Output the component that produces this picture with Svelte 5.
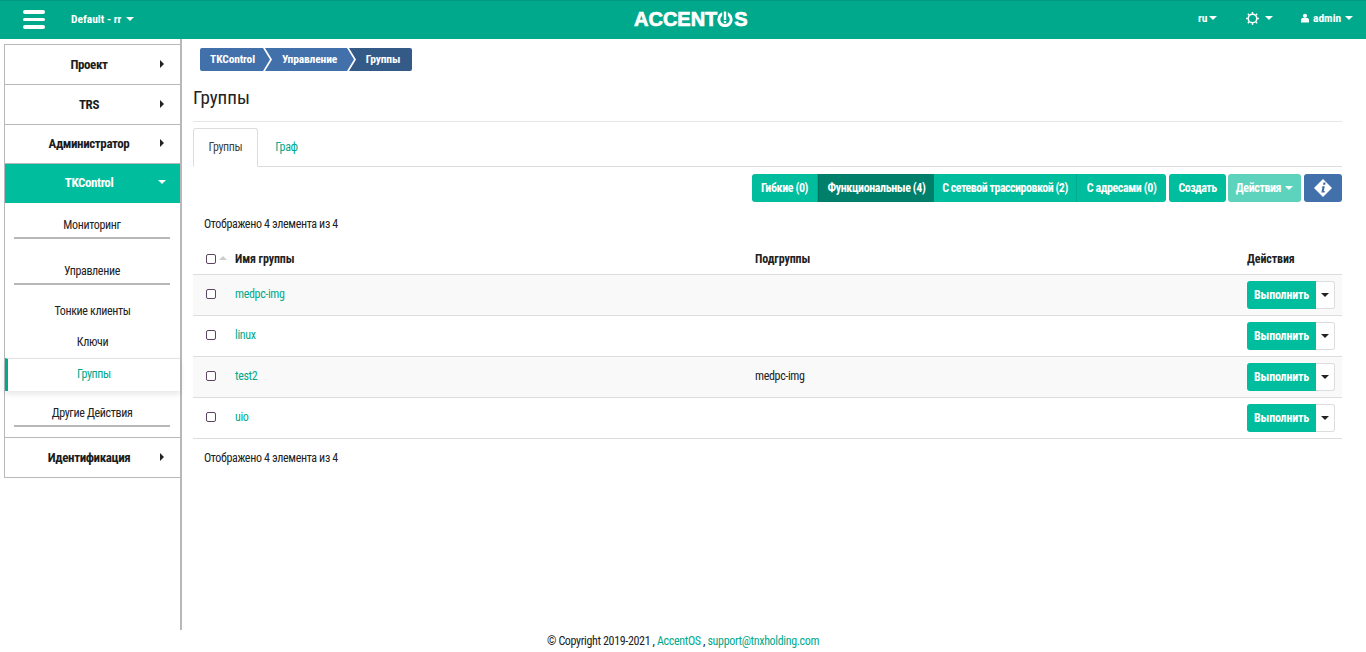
<script>
  const rows = [
    { name: 'medpc-img', sub: '' },
    { name: 'linux', sub: '' },
    { name: 'test2', sub: 'medpc-img' },
    { name: 'uio', sub: '' }
  ];
</script>

<div class="page">
  <header class="top">
    <div class="burger"><i></i><i></i><i></i></div>
    <div class="proj">Default - rr <b class="caret"></b></div>
    <div class="logo">ACCENT<svg class="logo-o" viewBox="0 0 16 16" width="16" height="16"><circle cx="8" cy="8.5" r="6.2" fill="none" stroke="#fff" stroke-width="3"/><rect x="5.2" y="0" width="5.6" height="5" fill="#00a98c"/><rect x="6.8" y="0.5" width="2.4" height="8.5" fill="#fff"/><rect x="6.8" y="10" width="2.4" height="2.2" fill="#fff"/></svg>S</div>
    <div class="tr lang">ru<b class="caret"></b></div>
    <div class="tr gear">
      <svg viewBox="0 0 14 14" width="13" height="13"><circle cx="7" cy="7" r="4.6" fill="none" stroke="#fff" stroke-width="1.6"/><path d="M7 0v2.4M7 11.6V14M0 7h2.4M11.6 7H14M2 2l1.7 1.7M10.3 10.3L12 12M2 12l1.7-1.7M10.3 3.7L12 2" stroke="#fff" stroke-width="1.5"/></svg>
      <b class="caret"></b>
    </div>
    <div class="tr user">
      <svg viewBox="0 0 10 11" width="8" height="10"><circle cx="5" cy="2.8" r="2.6" fill="#fff"/><path d="M0 11V7.6C0 6 1.4 5.4 2.4 5.4h5.2C8.6 5.4 10 6 10 7.6V11z" fill="#fff"/></svg>
      admin<b class="caret"></b>
    </div>
  </header>

  <div class="body">
    <aside class="side">
      <div class="menu">
        <div class="item first">Проект<b class="arrow"></b></div>
        <div class="item">TRS<b class="arrow"></b></div>
        <div class="item third">Администратор<b class="arrow"></b></div>
        <div class="item active">TKControl<b class="arrow-down"></b></div>
        <div class="sub">
          <div class="sub-h h1">Мониторинг</div>
          <div class="sub-h h2">Управление</div>
          <div class="leaf l1">Тонкие клиенты</div>
          <div class="leaf l2">Ключи</div>
          <div class="leaf cur">Группы</div>
          <div class="sub-h h3">Другие Действия</div>
        </div>
        <div class="item last">Идентификация<b class="arrow"></b></div>
      </div>
    </aside>

    <main class="main">
      <nav class="crumbs">
        <span class="c c1">TKControl</span>
        <span class="c c2">Управление</span>
        <span class="c c3">Группы</span>
      </nav>
      <h1>Группы</h1>
      <div class="tabs">
        <span class="tab on">Группы</span>
        <span class="tab t2">Граф</span>
      </div>
      <div class="actions">
        <div class="group">
          <span class="btn w1">Гибкие (0)</span>
          <span class="btn dark w2">Функциональные (4)</span>
          <span class="btn w3">С сетевой трассировкой (2)</span>
          <span class="btn w4">С адресами (0)</span>
        </div>
        <span class="btn solo w5">Создать</span>
        <span class="btn solo dim w6">Действия<b class="caret"></b></span>
        <span class="btn info"><svg viewBox="0 0 20 20" width="20" height="20"><path d="M10 1l9 9-9 9-9-9z" fill="#fff"/><path d="M10.4 4.6h2.2l-.4 2.2H10zM9.6 8.2h2.2l-1 4.8h1l-.3 1.4H8.4l1-4.8h-.8z" fill="#3f6eaa"/></svg></span>
      </div>
      <div class="count">Отображено 4 элемента из 4</div>
      <div class="thead">
        <span class="cb"></span><span class="sort"></span>
        <span class="c-name">Имя группы</span>
        <span class="c-sub">Подгруппы</span>
        <span class="c-act">Действия</span>
      </div>
      {#each rows as r, i}
        <div class="row" class:odd={i % 2 === 0}>
          <span class="cb"></span>
          <a class="c-name link" href="#top">{r.name}</a>
          <span class="c-sub">{r.sub}</span>
          <span class="split"><span class="run">Выполнить</span><span class="drop"><b class="caret k"></b></span></span>
        </div>
      {/each}
      <div class="count bottom">Отображено 4 элемента из 4</div>
    </main>
  </div>

  <footer class="foot">© Copyright 2019-2021 , <a href="#top">AccentOS</a> , <a href="#top">support@tnxholding.com</a></footer>
</div>

<style>
  :global(body) { margin: 0; background: #fff; }
  .page {
    width: 1366px; height: 652px; overflow: hidden; display: flex; flex-direction: column;
    font-family: "Liberation Sans Narrow", "Roboto", "Liberation Sans", sans-serif;
    font-stretch: condensed;
    font-size: 12px; letter-spacing: -0.35px; color: #222;
  }
  .top {
    height: 39px; flex: none; box-sizing: border-box; background: #00a98c; border-top: 1px solid #009a80;
    display: flex; align-items: center; color: #fff; position: relative;
  }
  .burger { margin-left: 23px; width: 22px; display: flex; flex-direction: column; gap: 4px; margin-top: -1px; }
  .burger i { display: block; height: 3.5px; background: #fff; border-radius: 2px; }
  .proj { margin-left: 26px; font-size: 11.5px; letter-spacing: 0; font-weight: 700; margin-top: -3px; width: 64px; white-space: nowrap; }
  .caret { display: inline-block; width: 0; height: 0; border: 4px solid transparent; border-top: 4px solid #fff; border-bottom: 0; vertical-align: 2px; margin-left: 2px; }
  .caret.k { border-top-color: #222; margin: 0; }
  .logo { margin-left: 499px; width: 114px; font-family: "Liberation Sans", sans-serif; font-stretch: normal; font-weight: 700; font-size: 20px; letter-spacing: 0; -webkit-text-stroke: 0.7px #fff; display: flex; align-items: center; color: #fff; margin-top: -2px; }
  .logo-o { margin: 0 1px 0 0; }
  .tr { font-size: 11.5px; letter-spacing: 0; font-weight: 700; display: flex; align-items: center; margin-top: -4px; white-space: nowrap; }
  .lang { margin-left: 450px; width: 48px; }
  .gear { width: 55px; gap: 4px; }
  .user { gap: 4px; }
  .user .caret { margin-left: 0; }
  .body { flex: 1; display: flex; min-height: 0; }
  .side { width: 182px; flex: none; box-sizing: border-box; height: 591px; border-right: 2px solid #b8b8b8; padding: 5px 0 0 4px; }
  .menu { border: 1px solid #b8b8b8; border-right: 0; }
  .item { height: 39px; border-bottom: 1px solid #b8b8b8; display: flex; align-items: center; justify-content: center; font-size: 13px; letter-spacing: -0.4px; font-weight: 700; position: relative; padding-right: 7px; color: #1c1c1c; }
  .item.third { height: 36px; padding-bottom: 2px; }
  .item.third .arrow { top: 14px; }
  .item.last { border-bottom: 0; }
  .active { background: #00bd9d; color: #fff; height: 39px; border-bottom: 0; box-sizing: border-box; padding-bottom: 2px; }
  .arrow { position: absolute; right: 16px; top: 15px; border: 4px solid transparent; border-left: 4px solid #222; border-right: 0; }
  .arrow-down { position: absolute; right: 14px; top: 16px; border: 4px solid transparent; border-top: 4px solid #fff; border-bottom: 0; }
  .sub { border-bottom: 1px solid #b8b8b8; box-sizing: border-box; height: 235px; display: flex; flex-direction: column; }
  .sub-h { margin: 0 10px 0 9px; box-sizing: border-box; border-bottom: 2px solid #b8b8b8; text-align: center; }
  .sub-h.h1 { height: 36px; padding-top: 15px; }
  .sub-h.h2 { height: 46px; padding-top: 25px; }
  .sub-h.h3 { height: 36px; padding-top: 15px; }
  .leaf { text-align: center; height: 31px; line-height: 31px; }
  .l1 { margin-top: 11px; }
  .cur { height: 33px; line-height: 31px; box-sizing: border-box; border-top: 1px solid #e4e4e4; border-left: 3px solid #00a98c; color: #00a98c; box-shadow: 0 3px 6px rgba(0,0,0,.1); }
  .main { width: 1149px; margin-left: 11px; display: flex; flex-direction: column; }
  .crumbs { display: flex; margin: 9px 0 0 7px; height: 23px; width: 212px; border-radius: 2px; overflow: hidden; background: #fff; }
  .c { display: flex; align-items: center; justify-content: center; color: #fff; font-size: 11.5px; letter-spacing: -0.15px; font-weight: 700; height: 23px; flex: none; background: #4170ab; box-sizing: border-box; padding-bottom: 2px; }
  .c1 { width: 70px; padding-right: 5px; clip-path: polygon(0 0, 63px 0, 70px 50%, 63px 100%, 0 100%); }
  .c2 { width: 89px; margin-left: -5px; padding-left: 7px; padding-right: 7px; clip-path: polygon(0 0, 82px 0, 89px 50%, 82px 100%, 0 100%, 7px 50%); }
  .c3 { width: 63px; margin-left: -5px; padding-left: 5px; background: #345a88; clip-path: polygon(0 0, 100% 0, 100% 100%, 0 100%, 7px 50%); }
  h1 { margin: 0; height: 51px; box-sizing: border-box; border-bottom: 1px solid #e6e6e6; padding-top: 17px; font-size: 19px; letter-spacing: 0; font-weight: 400; line-height: 20px; color: #222; }
  .tabs { margin-top: 6px; height: 39px; box-sizing: border-box; border-bottom: 1px solid #ddd; display: flex; }
  .tab { width: 65px; height: 39px; box-sizing: border-box; display: flex; align-items: center; justify-content: center; color: #00a98c; padding-bottom: 2px; }
  .tab.t2 { width: 57px; }
  .tab.on { color: #444; border: 1px solid #ddd; border-bottom-color: #fff; border-radius: 3px 3px 0 0; }
  .actions { display: flex; justify-content: flex-end; gap: 3px; margin-top: 7px; height: 28px; }
  .group { display: flex; border-radius: 3px; overflow: hidden; }
  .btn { height: 28px; box-sizing: border-box; display: flex; align-items: center; justify-content: center; background: #00bd9d; color: #fff; font-weight: 700; letter-spacing: -0.4px; border-right: 1px solid #00a98c; white-space: nowrap; flex: none; }
  .w1 { width: 66px; }
  .w2 { width: 116px; }
  .w3 { width: 143px; letter-spacing: -0.5px; }
  .w4 { width: 89px; }
  .w5 { width: 57px; margin-right: -1px; letter-spacing: -0.55px; }
  .w6 { width: 73px; }
  .group .btn:last-child { border-right: 0; }
  .dark { background: #007f6b; border-right: 0; border-left: 1px solid #00705e; }
  .solo { border-right: 0; border-radius: 3px; }
  .dim { background: #5dd3be; gap: 2px; }
  .info { background: #4170ab; border-right: 0; border-radius: 3px; width: 38px; padding: 0; }
  .count { margin: 15px 0 0 11px; height: 14px; line-height: 14px; }
  .thead { display: flex; align-items: center; height: 36px; margin-top: 8px; box-sizing: border-box; border-bottom: 1px solid #ddd; padding-left: 13px; position: relative; font-weight: 700; letter-spacing: -0.1px; padding-top: 5px; }
  .cb { width: 8px; height: 8px; border: 1px solid #5a4660; border-radius: 2px; flex: none; background: #fff; }
  .sort { position: absolute; left: 26px; top: 17px; border: 4px solid transparent; border-bottom: 4px solid #ccc; border-top: 0; }
  .c-name { position: absolute; left: 42px; }
  .c-sub { position: absolute; left: 562px; }
  .c-act { position: absolute; left: 1054px; }
  .row { height: 41px; box-sizing: border-box; border-bottom: 1px solid #ddd; display: flex; align-items: center; padding-left: 13px; padding-bottom: 2px; position: relative; }
  .odd { background: #f9f9f9; }
  .link { color: #00a98c; text-decoration: none; }
  .split { position: absolute; left: 1054px; top: 6px; display: flex; height: 28px; }
  .run { width: 69px; height: 28px; background: #00bd9d; color: #fff; font-weight: 700; letter-spacing: -0.2px; display: flex; align-items: center; justify-content: center; border-radius: 3px 0 0 3px; }
  .drop { width: 19px; height: 28px; box-sizing: border-box; border: 1px solid #ddd; border-left: 0; background: #fff; border-radius: 0 3px 3px 0; display: flex; align-items: center; justify-content: center; }
  .bottom { margin-top: 12px; }
  .foot { position: absolute; left: 0; top: 634px; width: 1366px; text-align: center; line-height: 14px; }
  .foot a { color: #00a98c; text-decoration: none; }
</style>
